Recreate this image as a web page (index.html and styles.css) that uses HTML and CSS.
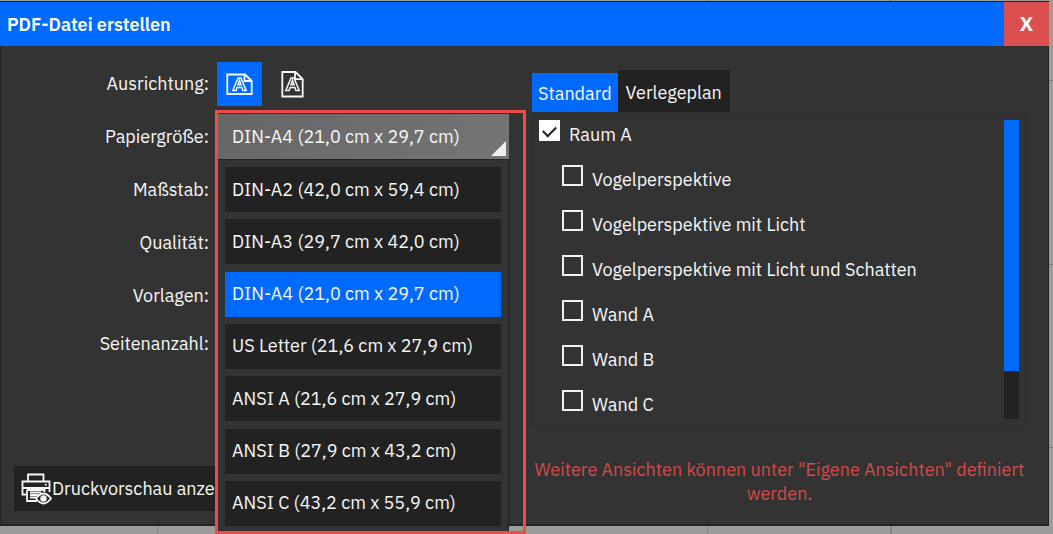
FILE: index.html
```html
<!DOCTYPE html>
<html lang="de">
<head>
<meta charset="utf-8">
<meta name="viewport" content="width=device-width, initial-scale=1">
<title>PDF-Datei erstellen</title>
<link rel="stylesheet" href="styles.css">
</head>
<body>
<main class="dialog" role="dialog" aria-labelledby="dialog-title">
  <header class="titlebar">
    <h1 class="title" id="dialog-title">PDF-Datei erstellen</h1>
    <button class="close" type="button" aria-label="Schließen"><span>X</span></button>
  </header>
  <div class="content">
    <section class="settings">
      <div class="row row-first">
        <span class="label" id="orientation">Ausrichtung:</span>
        <div class="orientations" role="group" aria-labelledby="orientation">
          <button class="orientation active" type="button" aria-label="Querformat" aria-pressed="true">
            <svg width="27" height="28" viewBox="0 0 27 28" fill="none" stroke="currentColor" stroke-width="1.8">
              <path d="M1.300 4.500H19L25.700 11V24H1.300ZM18.500 4.500V11H25.700"/>
              <path stroke-width="1.500" d="M6.800 20.500 12 8h3l5.200 12.500h-3.300l-1-3h-4.800l-1 3ZM12 14.800h3L13.500 10.500Z"/>
            </svg>
          </button>
          <button class="orientation" type="button" aria-label="Hochformat" aria-pressed="false">
            <svg width="27" height="28" viewBox="0 0 27 28" fill="none" stroke="currentColor" stroke-width="1.8">
              <path d="M3.300 2H16.500L23.700 9.200V26.500H3.300ZM16 2V9.200H23.700"/>
              <path stroke-width="1.500" d="M6.800 20.500 12 8h3l5.200 12.500h-3.300l-1-3h-4.800l-1 3ZM12 14.800h3L13.500 10.500Z"/>
            </svg>
          </button>
        </div>
      </div>
      <div class="row">
        <label class="label" for="paper">Papiergröße:</label>
        <div class="paper">
          <select class="paper-select" id="paper">
            <option>DIN-A4 (21,0 cm x 29,7 cm)</option>
          </select>
          <div class="paper-menu" role="listbox" aria-label="Papiergröße">
            <button class="paper-option" type="button" role="option">DIN-A2 (42,0 cm x 59,4 cm)</button>
            <button class="paper-option" type="button" role="option">DIN-A3 (29,7 cm x 42,0 cm)</button>
            <button class="paper-option selected" type="button" role="option" aria-selected="true">DIN-A4 (21,0 cm x 29,7 cm)</button>
            <button class="paper-option" type="button" role="option">US Letter (21,6 cm x 27,9 cm)</button>
            <button class="paper-option" type="button" role="option">ANSI A (21,6 cm x 27,9 cm)</button>
            <button class="paper-option" type="button" role="option">ANSI B (27,9 cm x 43,2 cm)</button>
            <button class="paper-option" type="button" role="option">ANSI C (43,2 cm x 55,9 cm)</button>
          </div>
          <div class="highlight"></div>
        </div>
      </div>
      <div class="row"><span class="label">Maßstab:</span></div>
      <div class="row"><span class="label">Qualität:</span></div>
      <div class="row"><span class="label">Vorlagen:</span></div>
      <div class="row row-last"><span class="label">Seitenanzahl:</span></div>
      <button class="preview" type="button">
        <svg width="31" height="32" viewBox="0 0 31 32" fill="none" stroke="currentColor" stroke-width="1.800">
          <path d="M7 8V1.500H22.500V8M5.500 21.500H1.500V8.500H28.500V19M1.500 15H28.500"/>
          <path d="M6 17V28H16M23.500 19V17H6M9 19.500H20M9 22H17M9 24.500H15"/>
          <circle cx="24.800" cy="11.800" r="1" fill="currentColor" stroke="none"/>
          <path class="preview-eye" d="M15 25.500Q22.500 15.500 30 25.500Q22.500 35.500 15 25.500Z"/>
          <circle cx="22.500" cy="25.500" r="3.200" fill="currentColor" stroke="none"/>
        </svg>
        <span>Druckvorschau anzeigen</span>
      </button>
    </section>
    <section class="views">
      <div class="tabs" role="tablist">
        <button class="tab tab-active" type="button" role="tab" aria-selected="true">Standard</button>
        <button class="tab" type="button" role="tab" aria-selected="false">Verlegeplan</button>
      </div>
      <div class="panel" role="tabpanel">
        <div class="checks">
          <label class="check"><input type="checkbox" checked><span>Raum A</span></label>
          <label class="check nested"><input type="checkbox"><span>Vogelperspektive</span></label>
          <label class="check nested"><input type="checkbox"><span>Vogelperspektive mit Licht</span></label>
          <label class="check nested"><input type="checkbox"><span>Vogelperspektive mit Licht und Schatten</span></label>
          <label class="check nested"><input type="checkbox"><span>Wand A</span></label>
          <label class="check nested"><input type="checkbox"><span>Wand B</span></label>
          <label class="check nested"><input type="checkbox"><span>Wand C</span></label>
        </div>
        <div class="scrollbar"><div class="thumb"></div></div>
      </div>
      <p class="hint">Weitere Ansichten können unter "Eigene Ansichten" definiert werden.</p>
    </section>
  </div>
</main>
</body>
</html>
```
FILE: styles.css
```css
* { box-sizing: border-box; }

body {
  margin: 0;
  min-height: 100vh;
  overflow: hidden;
  padding: 1px 4px 0 0;
  background:
    linear-gradient(#858585, #858585) 157px 0 / 1px 100% no-repeat,
    linear-gradient(#858585, #858585) 707px 0 / 1px 100% no-repeat,
    linear-gradient(#858585, #858585) 890px 0 / 2px 100% no-repeat,
    linear-gradient(#7c7c7c, #7c7c7c) 0 80px / 100% 1px no-repeat,
    linear-gradient(#7c7c7c, #7c7c7c) 0 264px / 100% 1px no-repeat,
    linear-gradient(#7c7c7c, #7c7c7c) 0 447px / 100% 1px no-repeat,
    #9c9c9b;
  color: #f7f7f7;
  font: 18px/24px "IBM Plex Sans", Roboto, sans-serif;
}

button, select, input { font: inherit; color: inherit; margin: 0; border: 0; border-radius: 0; }
button { padding: 0; background: #222; }
svg { display: block; flex: none; }

.dialog { background: #333; border: 1px solid #222; border-width: 1px 1px 2px; }

.titlebar { display: flex; height: 44px; margin: 0 -1px; background: #006aff; }
.title { flex: 1; margin: 0; padding-left: 7px; font-size: 18px; line-height: 46px; font-weight: 600; color: #fff; }
.close { width: 45px; background: #dd4e4e; color: #fff; font-size: 20px; font-weight: 700; }

.content { display: flex; }

.settings { flex: 0 0 531px; display: flex; flex-direction: column; gap: 8px; padding: 16px 0 13px; }
.row { display: flex; align-items: center; height: 45px; }
.row-first { height: 44px; }
.row-last { height: 36px; }
.label { flex: 0 0 208px; text-align: right; }

.orientations { display: flex; gap: 8px; margin-left: 8px; }
.orientation { display: grid; place-items: center; width: 45px; height: 44px; background: transparent; }
.orientation.active { background: #006aff; }

.paper { position: relative; width: 291px; margin-left: 9px; }
.paper-select { display: block; appearance: none; width: 100%; height: 45px; padding: 0 14px; background: linear-gradient(135deg, #666, #757575); }
.paper::after { content: ""; position: absolute; right: 3px; top: 27px; width: 15px; height: 15px; background: #eee; clip-path: polygon(100% 0, 100% 100%, 0 100%); }

.paper-menu { position: absolute; z-index: 1; top: 45px; left: 0; width: 100%; height: 372px; padding: 7px 7px 5px; display: flex; flex-direction: column; justify-content: space-between; background: #333; border: 1px solid #222; border-width: 1px 1px 0 0; }
.paper-option { height: 45px; padding: 0 7px; text-align: left; }
.paper-option.selected { background: #006aff; }

.highlight { position: absolute; z-index: 2; top: -4px; left: -3px; width: 311px; height: 424px; border: 3px solid #eb4d47; pointer-events: none; }

.preview { display: flex; align-items: center; width: 250px; height: 45px; margin: auto 0 0 13px; padding-left: 7px; white-space: nowrap; }
.preview-eye { fill: #222; }

.views { flex: 1; min-width: 0; padding: 24px 21px 18px 0; }
.tabs { display: flex; align-items: flex-end; }
.tab { height: 42px; padding: 4px 8px 0; }
.tab-active { height: 39px; padding: 2px 6px 0; background: #006aff; }

.panel { display: flex; padding: 7px 7px 7px 6px; border: 1px solid #2e2e2e; }
.checks { flex: 1; height: 299px; overflow: hidden; }
.check { display: flex; align-items: flex-start; gap: 9px; height: 45px; }
.check span { padding-top: 3px; }
.check input { appearance: none; flex: none; width: 21px; height: 21px; border: 2px solid #f2f2f2; }
.check input:checked { background: #fff; border-color: #fff; display: grid; place-items: center; }
.check input:checked::before { content: ""; width: 11px; height: 6px; border: 2px solid #222; border-width: 0 0 2px 2px; transform: translateY(-1px) rotate(-45deg); }
.nested { padding-left: 23px; }
.scrollbar { width: 15px; background: #222; }
.thumb { height: 251px; background: #006aff; }

.hint { margin: 31px 0 0; text-align: center; color: #d24a4a; }
```
